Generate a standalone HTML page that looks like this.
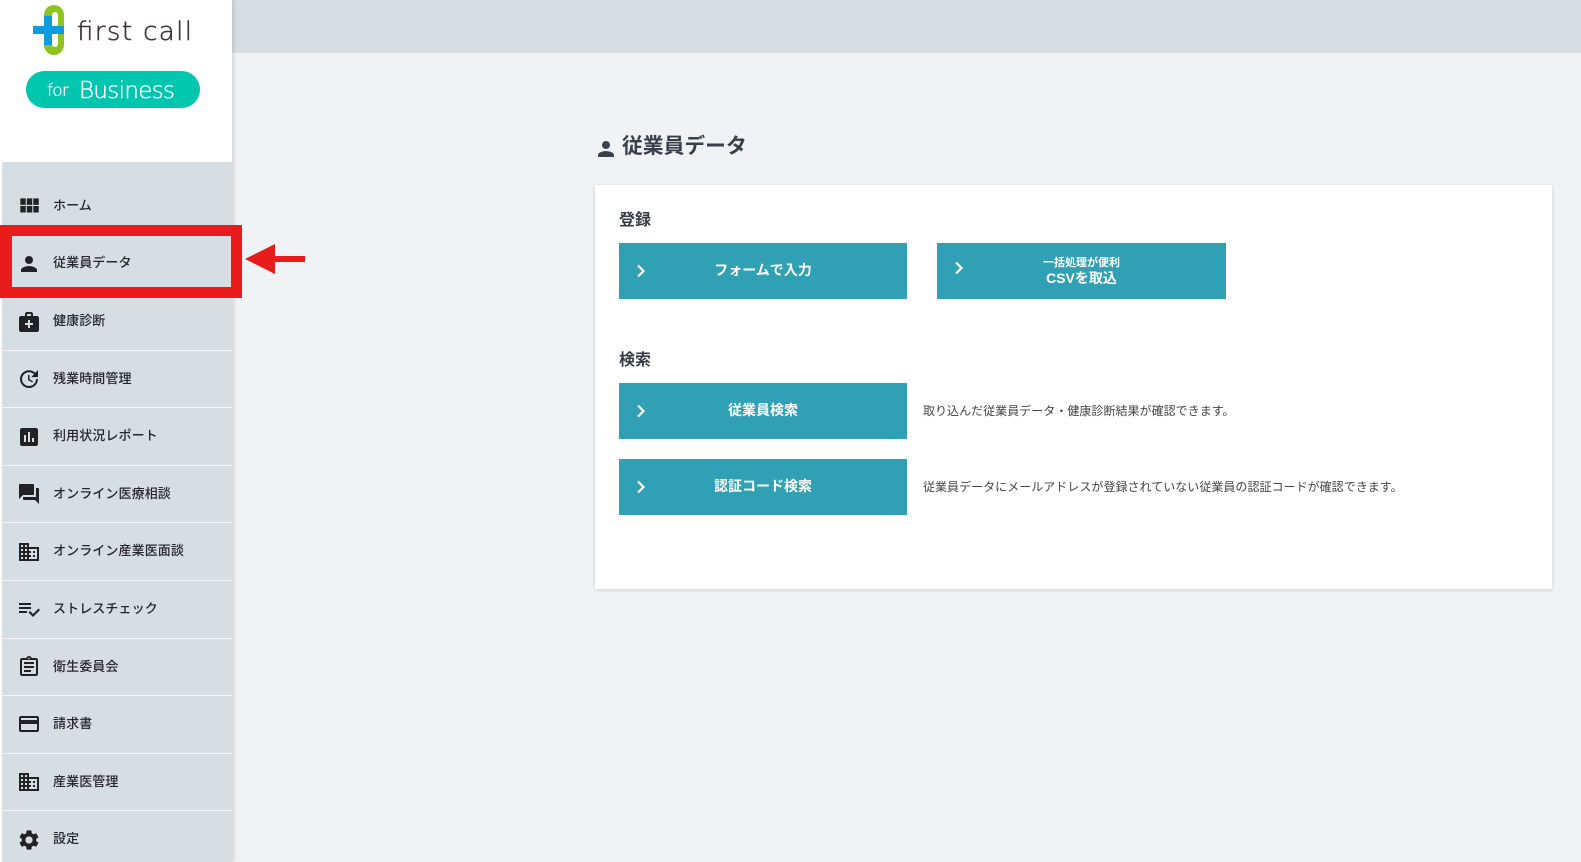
<!DOCTYPE html>
<html lang="ja">
<head>
<meta charset="utf-8">
<title>従業員データ</title>
<style>
html,body{margin:0;padding:0;width:1581px;height:862px;overflow:hidden;background:#eff3f6;font-family:"Liberation Sans","Noto Sans CJK JP",sans-serif;color:#2b2f36}
*{box-sizing:border-box}
.abs{position:absolute}
#top{left:232px;top:0;width:1349px;height:53px;background:#d5dde5}
#side{left:0;top:0;width:232px;height:862px;background:#fff;box-shadow:2px 0 4px rgba(0,0,0,.12)}
#nav{left:2px;top:162px;width:230px;height:700px;background:#d5dde5}
.sep{position:absolute;left:2px;width:230px;height:1px;background:#f2f4f7}
.ico{position:absolute;left:17px;width:24px;height:24px;fill:#212226}
.lab{position:absolute;left:53px;font-size:13px;line-height:20px;font-weight:500;letter-spacing:.1px;color:#25272c;white-space:nowrap}
.btn{position:absolute;background:#30a1b5;color:#fff;font-weight:700;font-size:14px;text-align:center;height:56px;line-height:54px}
.btn svg{position:absolute;left:16px;top:21px;width:12px;height:14px;fill:none;stroke:#fff;stroke-width:2.2}
.h3{position:absolute;left:619px;font-size:16px;line-height:22px;font-weight:700;color:#353c47}
.desc{position:absolute;left:923px;font-size:12px;line-height:18px;letter-spacing:.03px;color:#444;white-space:nowrap}
</style>
</head>
<body>
<div id="top" class="abs"></div>
<div id="side" class="abs"></div>
<div id="nav" class="abs"></div>

<!-- logo -->
<svg class="abs" style="left:0;top:0" width="232" height="120" viewBox="0 0 232 120">
  <rect x="44" y="5" width="20" height="50" rx="10" fill="#8fc31f"/>
  <rect x="52" y="12" width="6" height="35" rx="3" fill="#fff"/>
  <rect x="33" y="26" width="31" height="8" fill="#0f9be0"/>
  <rect x="44" y="16" width="8" height="29" fill="#0f9be0"/>
  <text x="77" y="40" font-family="'DejaVu Sans',sans-serif" font-size="26" fill="#3f3431" stroke="#3f3431" stroke-width=".5" textLength="115" lengthAdjust="spacing" style="font-weight:200">first call</text>
  <rect x="26" y="71" width="174" height="37" rx="18.500" fill="#00c6b0"/>
  <text x="47" y="96" font-family="'DejaVu Sans',sans-serif" font-size="17" fill="#fff" stroke="#fff" stroke-width=".3" textLength="22" style="font-weight:200">for</text>
  <text x="79" y="98" font-family="'DejaVu Sans',sans-serif" font-size="23" fill="#fff" stroke="#fff" stroke-width=".4" textLength="96" lengthAdjust="spacing" style="font-weight:200">Business</text>
</svg>

<!-- separators -->
<div class="sep" style="top:350px"></div>
<div class="sep" style="top:407px"></div>
<div class="sep" style="top:465px"></div>
<div class="sep" style="top:522px"></div>
<div class="sep" style="top:580px"></div>
<div class="sep" style="top:638px"></div>
<div class="sep" style="top:695px"></div>
<div class="sep" style="top:753px"></div>
<div class="sep" style="top:810px"></div>

<!-- red highlight -->
<div class="abs" style="left:0;top:225px;width:242px;height:73px;border:11px solid #e81c1c;border-left-width:12px"></div>
<svg class="abs" style="left:240px;top:240px" width="70" height="40" viewBox="0 0 70 40">
  <path d="M5 19L35 4v12h30v6H35v12z" fill="#e81c1c"/>
</svg>

<!-- nav items -->
<svg class="ico" style="left:16px;top:193px;width:26px;height:26px" viewBox="0 0 24 24"><path d="M4 11h5V5H4v6zm0 7h5v-6H4v6zm6 0h5v-6h-5v6zm6 0h5v-6h-5v6zm-6-7h5V5h-5v6zm6-6v6h5V5h-5z"/></svg>
<div class="lab" style="top:196px">ホーム</div>

<svg class="ico" style="top:252px" viewBox="0 0 24 24"><path d="M12 12c2.210 0 4-1.790 4-4s-1.790-4-4-4-4 1.790-4 4 1.790 4 4 4zm0 2c-2.670 0-8 1.340-8 4v2h16v-2c0-2.660-5.330-4-8-4z"/></svg>
<div class="lab" style="top:253px">従業員データ</div>

<svg class="ico" style="top:310px" viewBox="0 0 24 24"><path d="M20 6h-4V4c0-1.100-.9-2-2-2h-4c-1.100 0-2 .9-2 2v2H4c-1.100 0-2 .9-2 2v12c0 1.100.9 2 2 2h16c1.100 0 2-.9 2-2V8c0-1.100-.9-2-2-2zM10 4h4v2h-4V4zm6 11h-3v3h-2v-3H8v-2h3v-3h2v3h3v2z"/></svg>
<div class="lab" style="top:311px">健康診断</div>

<svg class="ico" style="top:367px" viewBox="0 0 24 24"><path d="M21 10.120h-6.780l2.740-2.820c-2.730-2.700-7.150-2.800-9.880-.1-2.730 2.710-2.730 7.080 0 9.790s7.150 2.710 9.880 0C18.320 15.650 19 14.080 19 12.100h2c0 1.980-.88 4.550-2.640 6.290-3.510 3.480-9.210 3.480-12.720 0-3.500-3.470-3.530-9.110-.02-12.580s9.140-3.470 12.650 0L21 3v7.120zM12.500 8v4.250l3.500 2.080-.72 1.210L11 13V8h1.500z"/></svg>
<div class="lab" style="top:369px">残業時間管理</div>

<svg class="ico" style="top:425px" viewBox="0 0 24 24"><path d="M19 3H5c-1.100 0-2 .9-2 2v14c0 1.100.9 2 2 2h14c1.100 0 2-.9 2-2V5c0-1.100-.9-2-2-2zM9 17H7v-7h2v7zm4 0h-2V7h2v10zm4 0h-2v-4h2v4z"/></svg>
<div class="lab" style="top:426px">利用状況レポート</div>

<svg class="ico" style="top:482px" viewBox="0 0 24 24"><path d="M21 6h-2v9H6v2c0 .55.45 1 1 1h11l4 4V7c0-.55-.45-1-1-1zm-4 6V3c0-.55-.45-1-1-1H3c-.55 0-1 .45-1 1v14l4-4h10c.55 0 1-.45 1-1z"/></svg>
<div class="lab" style="top:484px">オンライン医療相談</div>

<svg class="ico" style="top:540px" viewBox="0 0 24 24"><path d="M12 7V3H2v18h20V7H12zM6 19H4v-2h2v2zm0-4H4v-2h2v2zm0-4H4V9h2v2zm0-4H4V5h2v2zm4 12H8v-2h2v2zm0-4H8v-2h2v2zm0-4H8V9h2v2zm0-4H8V5h2v2zm10 12h-8v-2h2v-2h-2v-2h2v-2h-2V9h8v10zm-2-8h-2v2h2v-2zm0 4h-2v2h2v-2z"/></svg>
<div class="lab" style="top:541px">オンライン産業医面談</div>

<svg class="ico" style="top:597px" viewBox="0 0 24 24"><path d="M14 10H2v2h12v-2zm0-4H2v2h12V6zM2 16h8v-2H2v2zm19.500-4.500L23 13l-6.990 7-4.510-4.500L13 14l3.010 3 5.490-5.500z"/></svg>
<div class="lab" style="top:599px">ストレスチェック</div>

<svg class="ico" style="top:655px" viewBox="0 0 24 24"><path d="M7 15h7v2H7zm0-4h10v2H7zm0-4h10v2H7zm12-4h-4.180C14.400 1.840 13.300 1 12 1c-1.300 0-2.400.84-2.820 2H5c-1.100 0-2 .9-2 2v14c0 1.100.9 2 2 2h14c1.100 0 2-.9 2-2V5c0-1.100-.9-2-2-2zm-7-.25c.41 0 .75.34.75.75s-.34.75-.75.75-.75-.34-.75-.75.34-.75.75-.75zM19 19H5V5h14v14z"/></svg>
<div class="lab" style="top:657px">衛生委員会</div>

<svg class="ico" style="top:712px" viewBox="0 0 24 24"><path d="M20 4H4c-1.110 0-1.990.89-1.990 2L2 18c0 1.110.89 2 2 2h16c1.110 0 2-.89 2-2V6c0-1.110-.89-2-2-2zm0 14H4v-6h16v6zm0-10H4V6h16v2z"/></svg>
<div class="lab" style="top:714px">請求書</div>

<svg class="ico" style="top:770px" viewBox="0 0 24 24"><path d="M12 7V3H2v18h20V7H12zM6 19H4v-2h2v2zm0-4H4v-2h2v2zm0-4H4V9h2v2zm0-4H4V5h2v2zm4 12H8v-2h2v2zm0-4H8v-2h2v2zm0-4H8V9h2v2zm0-4H8V5h2v2zm10 12h-8v-2h2v-2h-2v-2h2v-2h-2V9h8v10zm-2-8h-2v2h2v-2zm0 4h-2v2h2v-2z"/></svg>
<div class="lab" style="top:772px">産業医管理</div>

<svg class="ico" style="top:828px" viewBox="0 0 24 24"><path d="M19.140 12.940c.04-.3.06-.61.06-.94 0-.32-.02-.64-.07-.94l2.030-1.580c.18-.14.23-.41.12-.61l-1.920-3.320c-.12-.22-.37-.29-.59-.22l-2.390.96c-.5-.38-1.030-.7-1.620-.94l-.36-2.540c-.04-.24-.24-.41-.48-.41h-3.840c-.24 0-.43.17-.47.41l-.36 2.540c-.59.24-1.130.57-1.620.94l-2.390-.96c-.22-.08-.47 0-.59.22L2.740 8.870c-.12.21-.08.47.12.61l2.030 1.580c-.05.3-.09.63-.09.94s.02.64.07.94l-2.030 1.580c-.18.14-.23.41-.12.61l1.920 3.320c.12.22.37.29.59.22l2.390-.96c.5.38 1.030.7 1.620.94l.36 2.540c.05.24.24.41.48.41h3.840c.24 0 .44-.17.47-.41l.36-2.540c.59-.24 1.130-.56 1.620-.94l2.390.96c.22.08.47 0 .59-.22l1.920-3.320c.12-.22.07-.47-.12-.61l-2.010-1.580zM12 15.600c-1.980 0-3.600-1.620-3.600-3.600s1.620-3.600 3.600-3.600 3.600 1.620 3.600 3.600-1.620 3.600-3.600 3.600z"/></svg>
<div class="lab" style="top:829px">設定</div>

<!-- heading -->
<svg class="abs" style="left:594px;top:137px;fill:#38434f" width="24" height="24" viewBox="0 0 24 24"><path d="M12 12c2.210 0 4-1.790 4-4s-1.790-4-4-4-4 1.790-4 4 1.790 4 4 4zm0 2c-2.670 0-8 1.340-8 4v2h16v-2c0-2.660-5.330-4-8-4z"/></svg>
<div class="abs" style="left:622px;top:132px;font-size:20.800px;line-height:30px;font-weight:700;color:#38404c;white-space:nowrap">従業員データ</div>

<!-- card -->
<div class="abs" style="left:595px;top:185px;width:957px;height:404px;background:#fff;box-shadow:0 1px 4px rgba(0,0,0,.14)"></div>

<div class="h3" style="top:210px">登録</div>
<div class="btn" style="left:619px;top:243px;width:288px"><svg viewBox="0 0 12 14"><path d="M3 1.500L8.500 7L3 12.500"/></svg>フォームで入力</div>
<div class="btn" style="left:937px;top:243px;width:289px;line-height:16px;padding-top:12px">
  <svg style="top:18px" viewBox="0 0 12 14"><path d="M3 1.500L8.500 7L3 12.500"/></svg>
  <div style="font-size:11px;line-height:16px">一括処理が便利</div>
  <div style="font-size:14px;line-height:15px">CSVを取込</div>
</div>

<div class="h3" style="top:350px">検索</div>
<div class="btn" style="left:619px;top:383px;width:288px"><svg viewBox="0 0 12 14"><path d="M3 1.500L8.500 7L3 12.500"/></svg>従業員検索</div>
<div class="desc" style="top:402px">取り込んだ従業員データ・健康診断結果が確認できます。</div>
<div class="btn" style="left:619px;top:459px;width:288px"><svg viewBox="0 0 12 14"><path d="M3 1.500L8.500 7L3 12.500"/></svg>認証コード検索</div>
<div class="desc" style="top:478px">従業員データにメールアドレスが登録されていない従業員の認証コードが確認できます。</div>
</body>
</html>
